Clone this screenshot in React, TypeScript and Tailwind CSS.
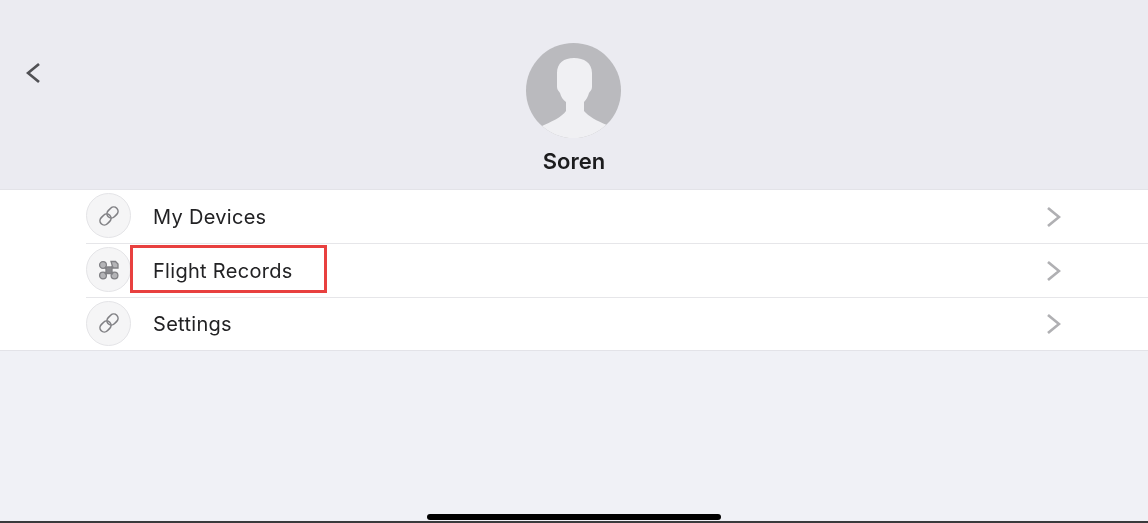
const font = "font-['Inter','Liberation_Sans',sans-serif]";

function LinkIcon() {
  return (
    <svg width="22" height="22" viewBox="0 0 22 22" fill="none" stroke="#808084" strokeWidth="1.6">
      <rect x="1.5" y="10.2" width="12" height="8.6" rx="4.3" transform="rotate(-45 7.5 14.5)" />
      <rect x="8.5" y="3.2" width="12" height="8.6" rx="4.3" transform="rotate(-45 14.5 7.5)" />
    </svg>
  );
}

function DroneIcon() {
  return (
    <svg width="22" height="22" viewBox="0 0 22 22" fill="#8b8b8f" stroke="#808084" strokeWidth="1.3">
      <circle cx="5" cy="6" r="3.4" fill="#b4b4b7" />
      <path d="M13 2.5h4.5l2.5 2.5v4h-5z" fill="#b4b4b7" />
      <circle cx="5" cy="16.5" r="3.4" fill="#b4b4b7" />
      <circle cx="16.5" cy="16.5" r="3.4" fill="#b4b4b7" />
      <path d="M7 8l8 7M15 7.5l-8 7.5" strokeWidth="2.4" />
      <rect x="8" y="8" width="6" height="6.5" rx="1.5" />
    </svg>
  );
}

function Row({ label, icon, last }: { label: string; icon: React.ReactNode; last?: boolean }) {
  return (
    <div className={`pl-[86px] ${last ? "h-[52px]" : "h-[54px]"}`}>
      <div className={`flex h-full items-center ${last ? "" : "border-b border-[#e6e6e9]"}`}>
        <div className="mb-[2px] flex h-[45px] w-[45px] shrink-0 items-center justify-center rounded-full border border-[#e4e4e7] bg-[#f5f5f6]">
          {icon}
        </div>
        <span className="ml-[22px] text-[20px] leading-[26px] tracking-[0.3px] text-[#222224]">{label}</span>
        <svg className="ml-auto mr-[87px]" width="15" height="22" viewBox="0 0 15 22" fill="none" stroke="#b0b0b3" strokeWidth="2.7">
          <path d="M2 2l11 9-11 9" />
        </svg>
      </div>
    </div>
  );
}

export default function App() {
  return (
    <div className={`flex h-[523px] w-[1148px] flex-col overflow-hidden bg-[#f0f1f6] blur-[0.4px] ${font}`}>
      <header className="grid h-[190px] grid-cols-[1fr_auto_1fr] border-b border-[#e3e3e8] bg-[#ebebf1]">
        <div className="pl-[26px] pt-[62px]">
          <svg width="15" height="22" viewBox="0 0 15 22" fill="none" stroke="#505054" strokeWidth="2.7">
            <path d="M13 2L2 11l11 9" />
          </svg>
        </div>
        <div className="flex flex-col items-center pt-[43px]">
          <svg className="mr-[1px]" width="95" height="95" viewBox="0 0 95 95">
            <defs>
              <clipPath id="avatar-clip">
                <circle cx="47.5" cy="47.5" r="47.5" />
              </clipPath>
            </defs>
            <circle cx="47.5" cy="47.5" r="47.5" fill="#bababe" />
            <path
              clipPath="url(#avatar-clip)"
              fill="#f0f0f3"
              d="M31 30C31 20 38 15 48 15C58 15 66 20 66 30L66 44C66 47 64 48 63 50C62 54 60 57 58 59L58 68C62 73 71 78 81 82L81 97L14 97L14 84C25 79 36 74 40 68L40 59C37 57 35 54 34 50C33 48 31 47 31 44Z"
            />
          </svg>
          <span className="mt-[11px] text-[22px] font-semibold leading-[24px] text-[#1c1c1e]">
            Soren
          </span>
        </div>
        <div />
      </header>

      <section className="relative border-b border-[#e3e3e8] bg-white">
        <Row label="My Devices" icon={<LinkIcon />} />
        <Row label="Flight Records" icon={<DroneIcon />} />
        <Row label="Settings" icon={<LinkIcon />} last />
        <div className="absolute left-[130px] top-[55px] h-[48px] w-[197px] border-[3px] border-[#e8403f]" />
      </section>

      <footer className="mt-auto flex flex-col items-center">
        <div className="h-[6px] w-[294px] rounded-full bg-black" />
        <div className="mt-[1px] h-[2px] w-full bg-[#3a3a3c]" />
      </footer>
    </div>
  );
}
